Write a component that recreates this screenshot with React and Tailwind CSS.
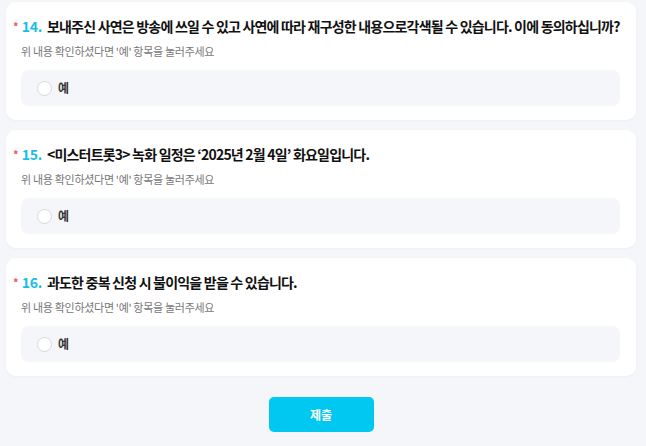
import React from 'react';

const questions = [
  { no: 14, text: '보내주신 사연은 방송에 쓰일 수 있고 사연에 따라 재구성한 내용으로각색될 수 있습니다. 이에 동의하십니까?' },
  { no: 15, text: '<미스터트롯3> 녹화 일정은 ‘2025년 2월 4일’ 화요일입니다.' },
  { no: 16, text: '과도한 중복 신청 시 불이익을 받을 수 있습니다.' },
];

function QuestionCard({ no, text }) {
  return (
    <div className="bg-white rounded-[10px] pt-[14px] pb-[14px] pl-[15px] pr-[16px] shadow-[0_1px_3px_rgba(0,0,0,0.03)]">
      {/* title */}
      <div className="-ml-[8px] flex items-center h-[20px] whitespace-nowrap text-[14px] font-bold text-[#111] tracking-[-0.8px]">
        <span className="text-[#f0506e] text-[11px] mr-[4px] leading-none">*</span>
        <span className="text-[#19bde6] mr-[5px] tracking-[-0.3px]">{no}.</span>
        <span>{text}</span>
      </div>
      <p className="mt-[9px] text-[11px] leading-[12px] text-[#777] tracking-[-0.3px]">
        위 내용 확인하셨다면 '예' 항목을 눌러주세요
      </p>
      {/* option */}
      <div className="mt-[13px] h-[36px] rounded-[7px] bg-[#f5f6fa] flex items-center pl-[16px]">
        <span className="w-[15px] h-[15px] rounded-full border border-[#d6d8dd] bg-white" />
        <span className="ml-[6px] text-[12px] font-bold text-[#333]">예</span>
      </div>
    </div>
  );
}

export default function App() {
  return (
    <div
      className="w-[646px] h-[446px] bg-[#f5f6fa] pt-[2px] pl-[6px] pr-[10px] overflow-hidden"
      style={{ fontFamily: '"Noto Sans CJK KR", "Noto Sans", sans-serif' }}
    >
      <div className="flex flex-col gap-[10px]">
        {questions.map(q => (
          <QuestionCard key={q.no} no={q.no} text={q.text} />
        ))}
      </div>
      <div className="flex justify-center mt-[21px]">
        <button className="w-[105px] h-[35px] rounded-[5px] bg-[#00c8f0] text-white text-[12px] font-bold">
          제출
        </button>
      </div>
    </div>
  );
}
